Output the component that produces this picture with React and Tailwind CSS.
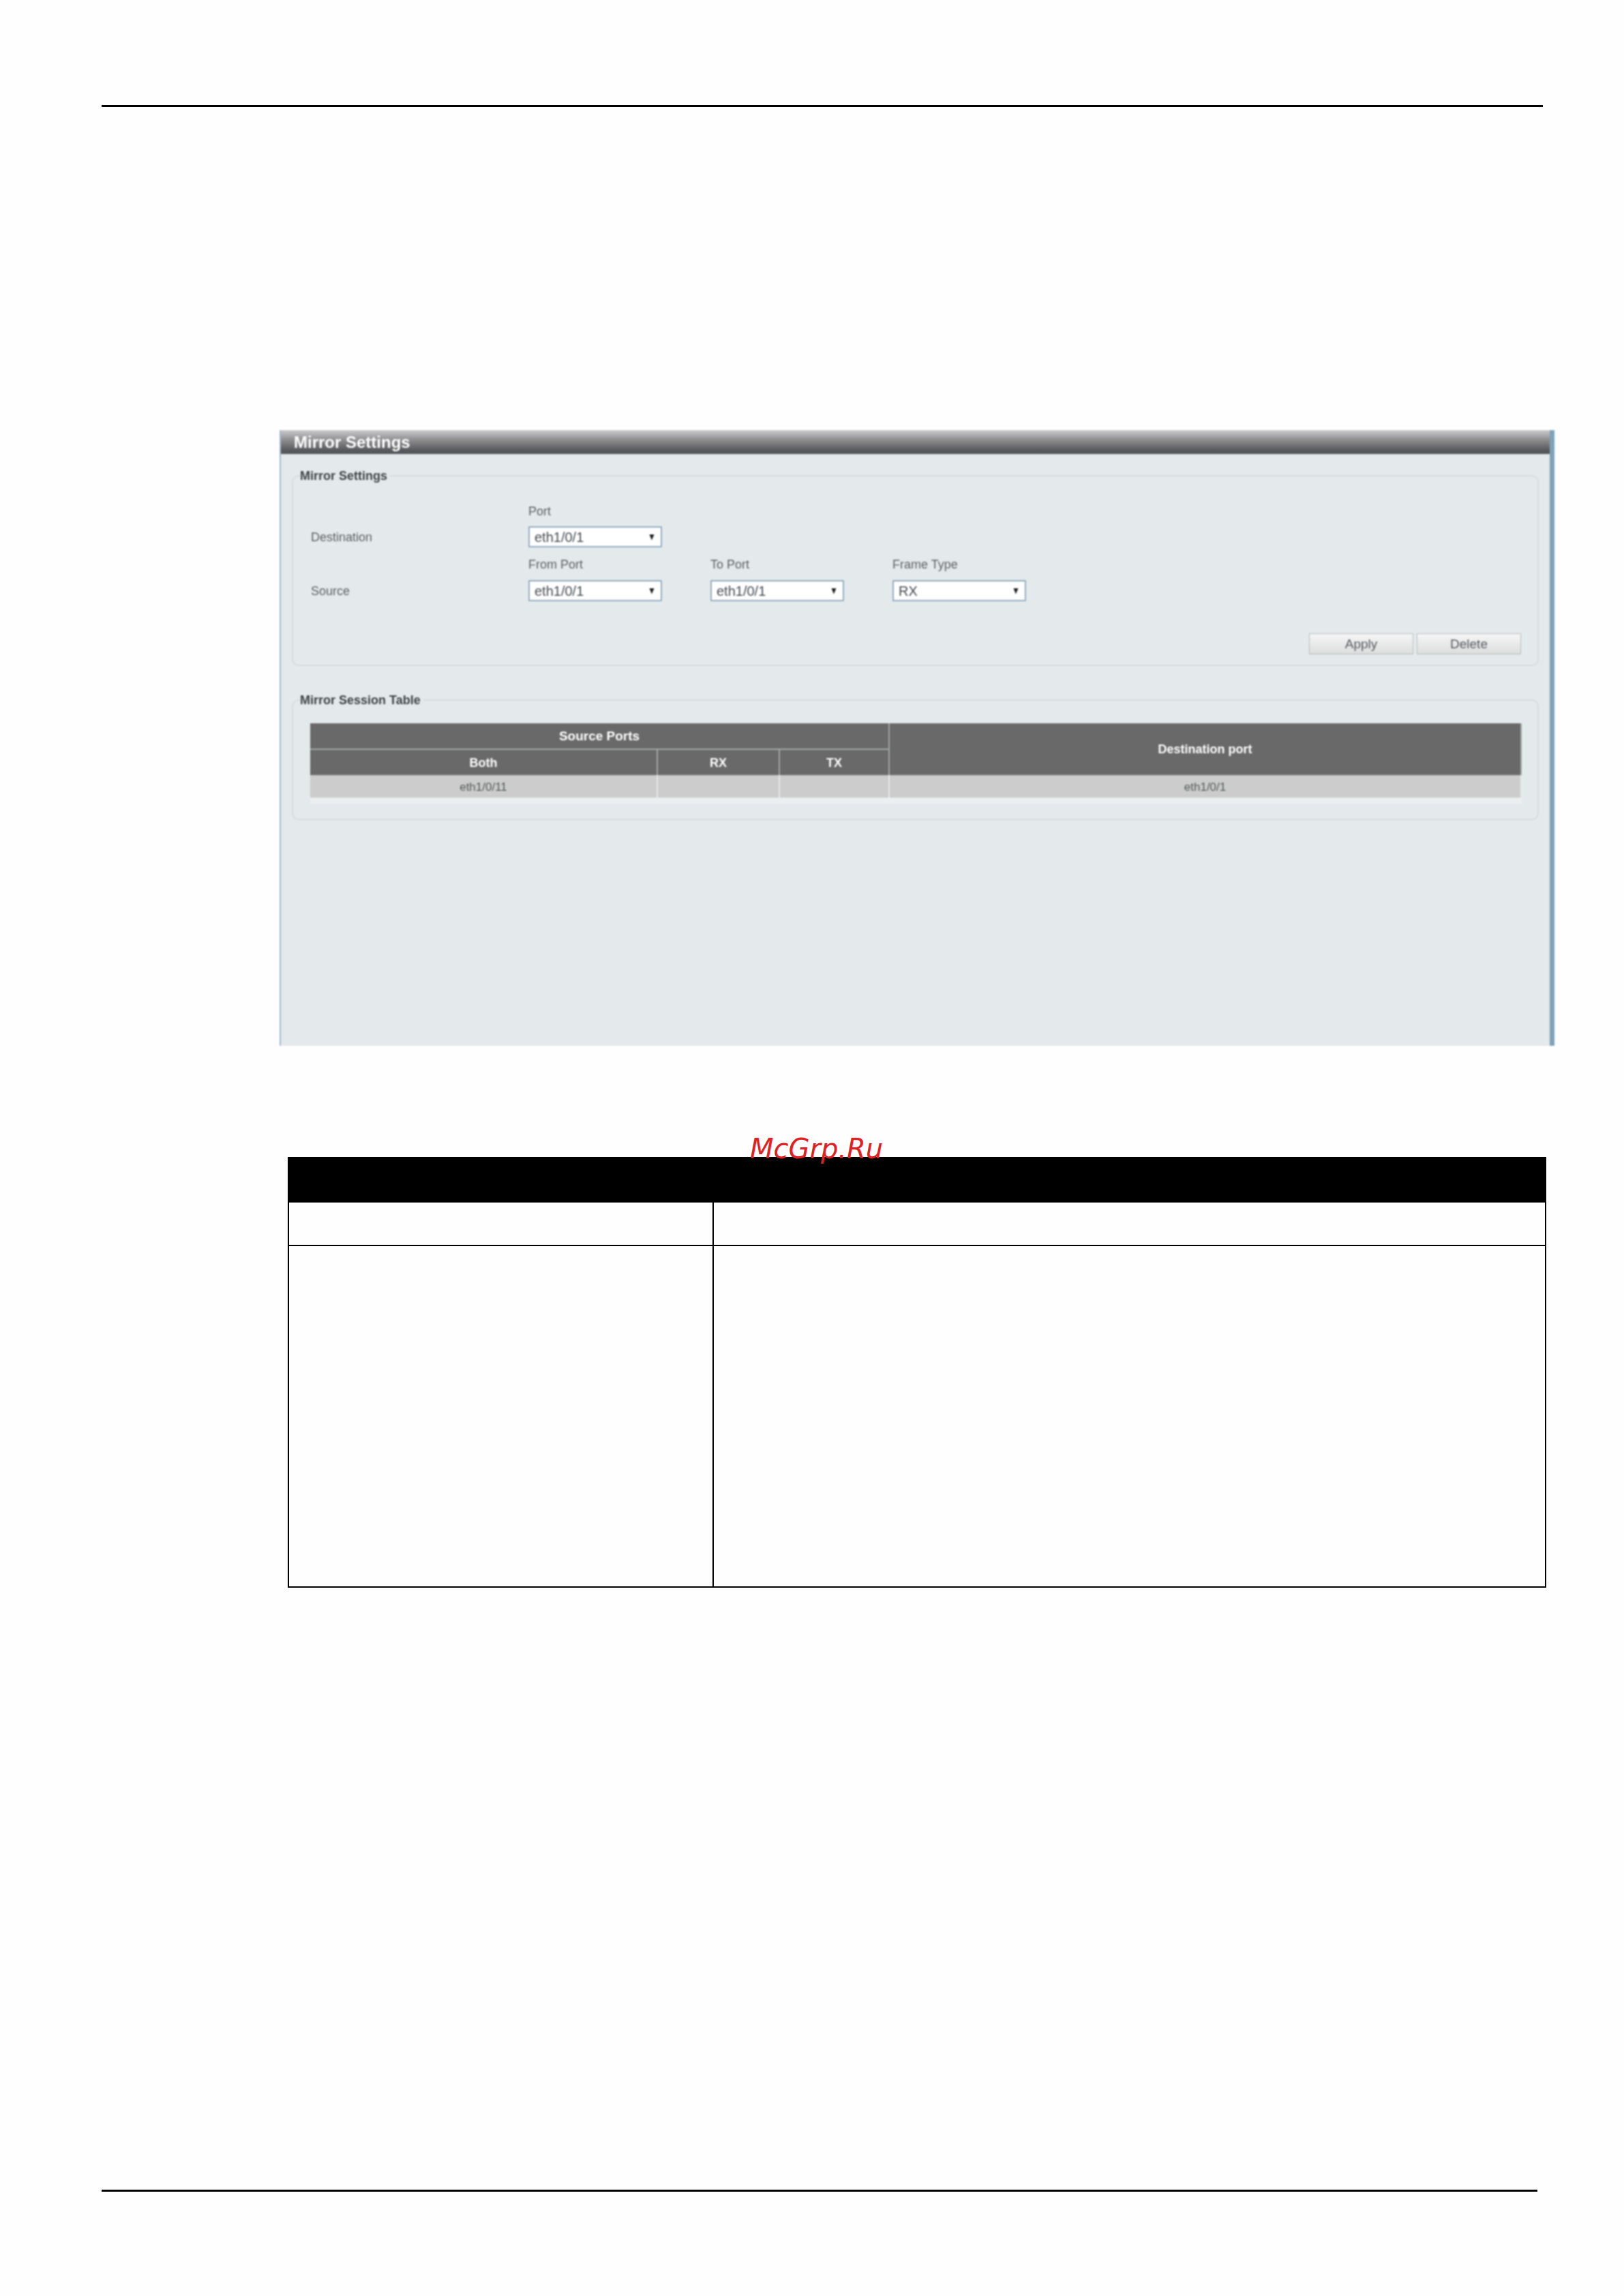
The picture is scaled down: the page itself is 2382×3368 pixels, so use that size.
const Arrow = () => (
  <svg width="8" height="10" viewBox="0 0 8 10" className="shrink-0">
    <path d="M0.5 1 H7.5 L4 9.5 Z" fill="#1c1c1c" />
  </svg>
);

const Select = ({ value }) => (
  <div className="flex h-[31px] w-[196px] items-center justify-between rounded-[1px] border-2 border-[#92abbd] bg-white pl-[7px] pr-[9px] text-[20px] leading-none text-[#444a4e]">
    <span>{value}</span>
    <Arrow />
  </div>
);

const Label = ({ children }) => (
  <div className="flex h-[20px] items-center pt-[1px] text-[18px] leading-none text-[#5c5f60]">{children}</div>
);

const Button = ({ children }) => (
  <div className="flex h-[31px] w-[153px] items-center justify-center border border-[#b9bcbc] bg-[linear-gradient(#f6f6f6,#dcdddd)] text-[19px] leading-none text-[#555a5c]">
    {children}
  </div>
);

const Fieldset = ({ title, className, children }) => (
  <fieldset className={`mx-[16px] rounded-[10px] border-2 border-[#d6dddf] ${className}`}>
    <legend className="ml-[10px] pr-[4px] text-[18px] font-bold leading-[20px] text-[#3c4042]">{title}</legend>
    {children}
  </fieldset>
);

const Th = ({ children, className = "", ...rest }) => (
  <th {...rest} className={`border-r-2 border-[#a3a5a5] bg-[#696969] p-0 text-center text-[18px] font-bold leading-none text-white ${className}`}>
    {children}
  </th>
);

const Td = ({ children, className = "" }) => (
  <td className={`h-[33px] border-r-2 border-[#e6e9e9] bg-[#cbcccb] p-0 pt-[2px] text-center text-[17px] leading-none text-[#56595a] ${className}`}>
    {children}
  </td>
);

export default function App() {
  return (
    <div className="h-[3368px] w-[2382px] overflow-hidden bg-[#fefefe] pt-[154px] font-['Liberation_Sans',Arial,sans-serif]">
      <div className="ml-[149px] h-[3px] w-[2114px] bg-black" />

      <div className="ml-[410px] mt-[474px] h-[903px] w-[1870px] border-l-2 border-r-[7px] border-l-[#9fb9cb] border-r-[#7da2bb] bg-[#e4eaec] blur-[0.8px]">
        <div className="flex h-[35px] items-center bg-[linear-gradient(#cbcbcd,#8f8f91_40%,#57585c_85%,#55565a)] pl-[19px] text-[24px] font-bold leading-none text-white">
          Mirror Settings
        </div>

        <Fieldset title="Mirror Settings" className="mt-[22px]">
          <div className="pb-[15px] pl-[26px] pr-[24px] pt-[31px]">
            <div className="grid grid-cols-[319px_267px_267px_196px] grid-rows-[33px_45px_34px_31px]">
              <div />
              <Label>Port</Label>
              <div />
              <div />

              <div className="flex h-[31px] items-center"><Label>Destination</Label></div>
              <Select value="eth1/0/1" />
              <div />
              <div />

              <div />
              <Label>From Port</Label>
              <Label>To Port</Label>
              <Label>Frame Type</Label>

              <div className="flex h-[31px] items-center"><Label>Source</Label></div>
              <Select value="eth1/0/1" />
              <Select value="eth1/0/1" />
              <Select value="RX" />
            </div>
            <div className="mt-[47px] flex justify-end gap-[5px]">
              <Button>Apply</Button>
              <Button>Delete</Button>
            </div>
          </div>
        </Fieldset>

        <Fieldset title="Mirror Session Table" className="mt-[40px]">
          <div className="pb-[31px] pl-[25px] pr-[22px] pt-[24px]">
            <table className="w-[1777px] table-fixed border-separate border-spacing-0 shadow-[0_9px_0_#ebeff0]">
              <colgroup>
                <col className="w-[510px]" />
                <col className="w-[179px]" />
                <col className="w-[161px]" />
                <col className="w-[927px]" />
              </colgroup>
              <thead>
                <tr>
                  <Th colSpan={3} className="h-[39px] border-b-2 text-[19px]">Source Ports</Th>
                  <Th rowSpan={2} className="border-r-0">Destination port</Th>
                </tr>
                <tr>
                  <Th className="h-[37px]">Both</Th>
                  <Th>RX</Th>
                  <Th>TX</Th>
                </tr>
              </thead>
              <tbody>
                <tr>
                  <Td>eth1/0/11</Td>
                  <Td />
                  <Td />
                  <Td className="border-r-0">eth1/0/1</Td>
                </tr>
              </tbody>
            </table>
          </div>
        </Fieldset>
      </div>

      <div className="relative ml-[422px] mt-[163px] w-[1846px]">
        <div className="h-[67px] bg-black" />
        <div className="grid grid-cols-[623px_1fr] border-x-2 border-b-2 border-black">
          <div className="h-[64px] border-b-2 border-r-2 border-black" />
          <div className="h-[64px] border-b-2 border-black" />
          <div className="h-[499px] border-r-2 border-black" />
          <div className="h-[499px]" />
        </div>
        <div className="absolute left-[678px] top-[-32px] text-[40px] italic leading-none text-[#e02024] font-['DejaVu_Sans',sans-serif]">
          McGrp.Ru
        </div>
      </div>

      <div className="ml-[149px] mt-[883px] h-[3px] w-[2106px] bg-black" />
    </div>
  );
}
